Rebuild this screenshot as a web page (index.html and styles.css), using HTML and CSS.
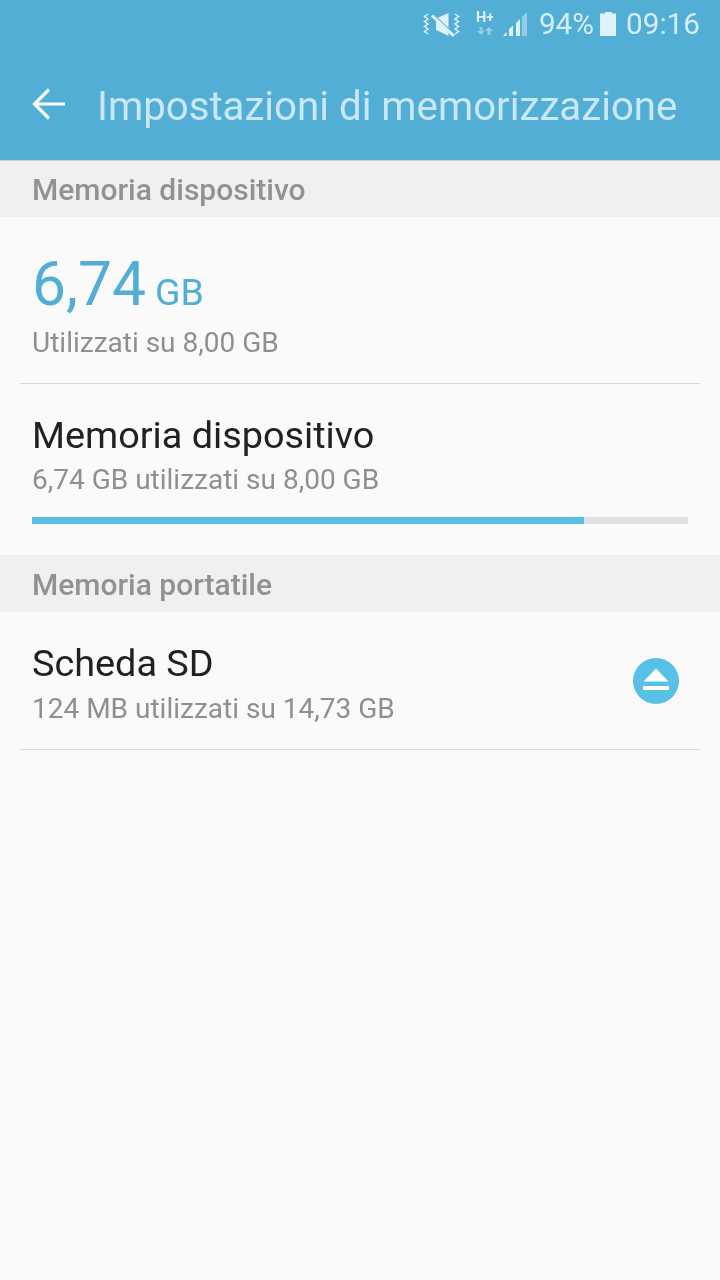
FILE: index.html
```html
<!DOCTYPE html>
<html lang="it">
<head>
<meta charset="utf-8">
<title>Impostazioni di memorizzazione</title>
<link rel="stylesheet" href="styles.css">
</head>
<body>
<div class="app">
  <header class="appbar">
    <div class="status">
      <svg class="ic-mute" width="38" height="26" viewBox="0 0 38 26">
        <path d="M5 3L1.500 5.500 5 8 1.500 10.500 5 13 1.500 15.500 5 18 1.500 20.500 5 23" class="wave"/>
        <path d="M32 3l3.500 2.500L32 8l3.500 2.500L32 13l3.500 2.500L32 18l3.500 2.500L32 23" class="wave"/>
        <path d="M13 7.500L25.500 2V25L13 19z" class="fill"/>
        <path d="M8 2L30 23" class="cut"/>
        <path d="M9 4.500L31 25" class="slash"/>
      </svg>
      <svg class="ic-net" width="17" height="28" viewBox="0 0 17 28">
        <text x="0" y="12" class="net-text">H+</text>
        <path d="M2.500 17h3v4H8l-4 4-4-4h2.500z" class="dim" transform="translate(1 0)"/>
        <path d="M10.500 25h3v-4H16l-4-4-4 4h2.500z" class="dim" transform="translate(1 0)"/>
      </svg>
      <svg class="ic-signal" width="24" height="24" viewBox="0 0 24 24">
        <path d="M0 24l3.500-4V24zM6 17l4-3.500V24H6zM13 11l4-4V24h-4z" class="fill"/>
        <path d="M19 5l5-5v24h-5z" class="dim"/>
      </svg>
      <span class="st-text">94%</span>
      <svg class="ic-batt" width="16" height="24" viewBox="0 0 16 24">
        <path d="M5 0h7v1.500h4V24H0V1.500h5z" class="fill"/>
      </svg>
      <span class="st-text">09:16</span>
    </div>
    <div class="titlebar">
      <svg class="ic-back" width="34" height="32" viewBox="0 0 34 32">
        <path d="M17 1.500L2.500 16 17 30.500M2.500 16H33" fill="none" stroke="#fff" stroke-width="3.200"/>
      </svg>
      <h1 class="title">Impostazioni di memorizzazione</h1>
    </div>
  </header>

  <div class="section-head">Memoria dispositivo</div>

  <section class="summary">
    <div class="amount"><span class="amount-num">6,74</span><span class="amount-unit">GB</span></div>
    <div class="sub">Utilizzati su 8,00 GB</div>
  </section>
  <div class="rule"></div>

  <section class="row-device">
    <div class="name">Memoria dispositivo</div>
    <div class="sub">6,74 GB utilizzati su 8,00 GB</div>
    <div class="bar"><div class="bar-fill" style="width:84.2%"></div></div>
  </section>

  <div class="section-head section-head-tall">Memoria portatile</div>

  <section class="row-sd">
    <div>
      <div class="name">Scheda SD</div>
      <div class="sub">124 MB utilizzati su 14,73 GB</div>
    </div>
    <svg class="ic-eject" width="46" height="46" viewBox="0 0 46 46">
      <circle cx="23" cy="23" r="23" fill="#58c0e6"/>
      <path d="M23 10.500L35.500 23.500h-25z" fill="#fff"/>
      <rect x="10" y="28" width="26" height="4" fill="#fff"/>
    </svg>
  </section>
  <div class="rule"></div>
</div>
</body>
</html>
```
FILE: styles.css
```css
* { box-sizing: border-box; }
html, body { margin: 0; padding: 0; }
body {
  width: 720px;
  height: 1280px;
  background: #fafafa;
  font-family: Roboto, "Noto Sans", sans-serif;
  overflow: hidden;
}
.app { display: flex; flex-direction: column; will-change: transform; }

.appbar {
  height: 161px;
  background: #52aed5;
  border-bottom: 1px solid #c9ced0;
  display: flex;
  flex-direction: column;
}
.status {
  height: 48px;
  display: flex;
  justify-content: flex-end;
  align-items: center;
  padding-right: 20px;
}
.st-text { font-size: 29.700px; line-height: 48px; color: #d5edf7; }
.ic-mute { margin-right: 15px; }
.ic-net { margin-right: 10px; }
.ic-signal { margin-right: 12px; }
.ic-batt { margin: 0 10px 0 6px; }
.fill { fill: #dff2fa; }
.dim { fill: #92cde5; }
.wave { fill: none; stroke: #dff2fa; stroke-width: 1.500; }
.cut { stroke: #52aed5; stroke-width: 2.500; }
.slash { stroke: #dff2fa; stroke-width: 3; }
.net-text { font-family: Roboto, sans-serif; font-size: 14.500px; font-weight: 700; fill: #dff2fa; }

.titlebar {
  height: 112px;
  display: flex;
  align-items: center;
  padding-left: 32px;
}
.ic-back { margin-bottom: 1px; }
.title {
  margin: 4px 0 0 31px;
  font-size: 40.200px;
  font-weight: 400;
  color: #c9e8f5;
  white-space: nowrap;
}

.section-head {
  height: 56px;
  background: #f0f0f0;
  padding: 1px 0 0 32px;
  font-size: 30px;
  font-weight: 500;
  line-height: 56px;
  color: #929292;
}
.section-head-tall { height: 57px; padding-top: 2px; }

.summary { padding: 33px 32px 0; height: 166px; }
.amount { display: flex; align-items: baseline; height: 76px; color: #52aed5; line-height: 70px; }
.amount-num { font-size: 60.500px; }
.amount-unit { font-size: 37.500px; margin-left: 9px; }
.sub { font-size: 28px; color: #8f8f8f; line-height: 34px; white-space: nowrap; }
.rule { height: 1px; margin: 0 20px; background: #d9d9d9; }

.row-device { height: 171px; padding: 29px 32px 0; }
.name { font-size: 37.800px; line-height: 44px; color: #212121; }
.row-device .sub { margin-top: 6px; }
.bar { height: 7px; margin-top: 20px; background: #e0e0df; }
.bar-fill { height: 100%; background: #58c0e6; }

.row-sd {
  height: 137px;
  display: flex;
  justify-content: space-between;
  align-items: flex-start;
  padding: 29px 41px 0 32px;
}
.row-sd .sub { margin-top: 7px; }
.ic-eject { margin-top: 17px; }
```
